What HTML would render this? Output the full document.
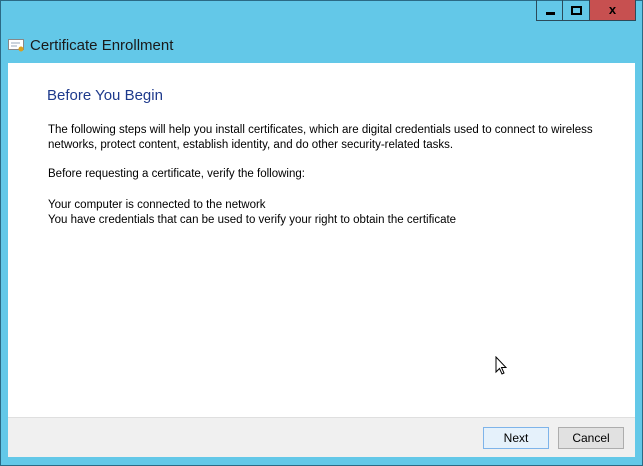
<!DOCTYPE html><html><head><style>
body{margin:0;width:643px;height:466px;background:#63c8e8;position:relative;overflow:hidden;font-family:"Liberation Sans",sans-serif}
.frame{position:absolute;left:0;top:0;width:641px;height:464px;border:1px solid #2b6a85;}
.t{position:absolute;white-space:nowrap}
.content{position:absolute;left:8px;top:63px;width:627px;height:354px;background:#fff}
.foot{position:absolute;left:8px;top:417px;width:627px;height:39px;background:#f0f0f0;border-top:1px solid #dfdfdf}
.btn{position:absolute;top:427px;height:20px;border:1px solid #adadad;background:#e1e1e1;font-size:12px;text-align:center;line-height:20px;color:#000}
p{margin:0}
</style></head><body>
<div class="frame"></div>
<div style="position:absolute;left:536px;top:0;width:27px;height:21px;border:1px solid #2b4a5a;border-top:0;box-sizing:border-box"><div style="position:absolute;left:9px;top:12px;width:9px;height:3px;background:#000"></div></div>
<div style="position:absolute;left:563px;top:0;width:27px;height:21px;border:1px solid #2b4a5a;border-left:0;border-top:0;box-sizing:border-box"><div style="position:absolute;left:8px;top:6px;width:7px;height:5px;border:2px solid #000"></div></div>
<div style="position:absolute;left:590px;top:0;width:46px;height:21px;background:#c75050;border:1px solid #2b4a5a;border-left:0;border-top:0;box-sizing:border-box;text-align:center;font-weight:bold;font-size:13px;line-height:20px">x</div>
<svg style="position:absolute;left:8px;top:38px" width="17" height="14"><rect x="0.5" y="1.5" width="15" height="10" fill="#fff" stroke="#888"/><line x1="3" y1="5" x2="12" y2="5" stroke="#9ab"/><line x1="3" y1="8" x2="9" y2="8" stroke="#9ab"/><circle cx="13" cy="11" r="2.5" fill="#d8a020"/></svg>
<div class="t" style="left:30px;top:37px;font-size:15px;color:#1a1a1a">Certificate Enrollment</div>
<div class="content"></div>
<div class="t" style="left:47px;top:87px;font-size:15px;color:#1e3a8c">Before You Begin</div>
<div class="t" style="left:48px;top:123px;font-size:11.5px;line-height:15px;color:#000">
<p>The following steps will help you install certificates, which are digital credentials used to connect to wireless</p>
<p>networks, protect content, establish identity, and do other security-related tasks.</p>
<p style="margin-top:14px">Before requesting a certificate, verify the following:</p>
<p style="margin-top:16px">Your computer is connected to the network</p>
<p>You have credentials that can be used to verify your right to obtain the certificate</p>
</div>
<svg style="position:absolute;left:495px;top:356px" width="12" height="20"><path d="M1 1 L1 16 L4.5 12.5 L7 18 L9 17 L6.5 11.5 L11 11.5 Z" fill="#fff" stroke="#000"/></svg>
<div class="foot"></div>
<div class="btn" style="left:483px;width:64px;border-color:#7eb4ea;background:#e5f1fb">Next</div>
<div class="btn" style="left:558px;width:64px">Cancel</div>
</body></html>
